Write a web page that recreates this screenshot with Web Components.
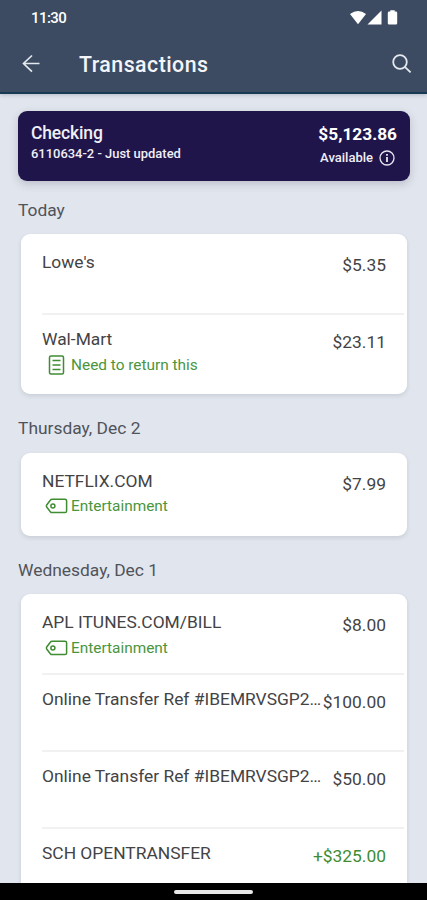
<!DOCTYPE html>
<html lang="en">
<head>
<meta charset="utf-8">
<title>Transactions</title>
<style>
html, body { margin: 0; height: 100%; overflow: hidden; }
body { font-family: Roboto, "Liberation Sans", sans-serif; }
</style>
</head>
<body>
<bank-screen>
  <status-bar slot="top" time="11:30"></status-bar>
  <app-bar slot="top">Transactions</app-bar>
  <account-card name="Checking" detail="6110634-2 - Just updated" balance="$5,123.86"></account-card>
  <day-group label="Today">
    <transaction-row amount="$5.35">Lowe's</transaction-row>
    <transaction-row amount="$23.11" note="Need to return this" icon="memo">Wal-Mart</transaction-row>
  </day-group>
  <day-group label="Thursday, Dec 2">
    <transaction-row amount="$7.99" note="Entertainment" icon="tag">NETFLIX.COM</transaction-row>
  </day-group>
  <day-group label="Wednesday, Dec 1">
    <transaction-row amount="$8.00" note="Entertainment" icon="tag">APL ITUNES.COM/BILL</transaction-row>
    <transaction-row amount="$100.00">Online Transfer Ref #IBEMRVSGP2…</transaction-row>
    <transaction-row amount="$50.00">Online Transfer Ref #IBEMRVSGP2…</transaction-row>
    <transaction-row amount="+$325.00" credit>SCH OPENTRANSFER</transaction-row>
  </day-group>
  <nav-pill slot="bottom"></nav-pill>
</bank-screen>
<script>
const define = (name, markup, fill) => customElements.define(name, class extends HTMLElement {
  constructor() {
    super();
    const t = document.createElement('template');
    t.innerHTML = markup;
    this.attachShadow({ mode: 'open' }).append(t.content.cloneNode(true));
  }
  connectedCallback() { if (fill) fill(this, this.shadowRoot); }
});

define('bank-screen', `
<style>
:host { display: flex; flex-direction: column; width: 427px; height: 900px; background: #e1e5ed; overflow: hidden; }
header { flex: none; height: 92px; background: #3c4b61; border-bottom: 2px solid #173b52; box-shadow: 0 1px 4px rgba(40,55,80,.25); }
main { flex: 1; min-height: 0; overflow: hidden; padding-top: 17px; }
</style>
<header><slot name="top"></slot></header>
<main><slot></slot></main>
<slot name="bottom"></slot>`);

define('status-bar', `
<style>
:host { display: flex; align-items: center; justify-content: space-between; height: 36px; padding: 0 28px 0 31px; color: #fff; font-size: 15px; font-weight: 500; box-sizing: border-box; }
span { letter-spacing: -.55px; }
svg { display: block; }
</style>
<span></span>
<svg width="50" height="16" viewBox="0 0 50 16" fill="#fff">
  <path d="M1 4.1Q9 -2.3 17 4.1L9 14.2Z"/><path d="M32.5 .5V14.5H18.5Z"/>
  <path d="M41.3 1.6V.3h4.4v1.3h1.2q1.3 0 1.3 1.3v10.3q0 1.3-1.3 1.3h-6.800q-1.300 0-1.300-1.300V2.900q0-1.300 1.300-1.300z"/>
</svg>`, (el, r) => r.querySelector('span').textContent = el.getAttribute('time'));

define('app-bar', `
<style>
:host { display: flex; align-items: center; height: 57px; padding: 0 15px 0 22px; color: #f3f5f9; box-sizing: border-box; }
h1 { flex: 1; margin: 0 0 0 38px; font-size: 21.300px; font-weight: 500; letter-spacing: .48px; line-height: 26px; padding-top: 1px; }
svg { display: block; fill: none; stroke: #e4e8ef; position: relative; top: -.5px; }
</style>
<svg width="19" height="20" viewBox="0 0 19 20" stroke-width="1.7"><path d="M17.500 9.500H1.800M10 1.500L1.500 9.500L10 17.700"/></svg>
<h1><slot></slot></h1>
<svg width="21" height="20" viewBox="0 0 21 20" stroke-width="1.8"><circle cx="9" cy="8" r="6.800"/><path d="M13.800 12.800L19.600 18.400"/></svg>`);

define('account-card', `
<style>
:host { display: flex; justify-content: space-between; box-sizing: border-box; height: 70px; margin: 0 17px 0 18px; padding: 11px 13px 0; border-radius: 9px; background: #20154b; color: #f0eff5; font-weight: 500; box-shadow: 0 3px 8px rgba(50,55,80,.22); white-space: nowrap; }
.name { font-size: 17.500px; line-height: 22px; letter-spacing: -.15px; }
.detail { font-size: 12.950px; line-height: 20px; }
.right { display: flex; flex-direction: column; align-items: flex-end; }
.bal { font-size: 17.300px; line-height: 24px; font-weight: 700; color: #fff; }
.avail { display: flex; align-items: center; gap: 6px; font-size: 13px; line-height: 24px; padding-right: 2px; }
svg { fill: none; stroke: #e8e6f0; display: block; }
</style>
<div><div class="name"></div><div class="detail"></div></div>
<div class="right"><div class="bal"></div><div class="avail"><span>Available</span>
<svg width="16" height="16" viewBox="0 0 16 16"><circle cx="8" cy="8" r="7" stroke-width="1.300"/><path d="M8 7V12M8 4V5.700" stroke-width="1.800"/></svg></div></div>`,
(el, r) => {
  r.querySelector('.name').textContent = el.getAttribute('name');
  r.querySelector('.detail').textContent = el.getAttribute('detail');
  r.querySelector('.bal').textContent = el.getAttribute('balance');
});

define('day-group', `
<style>
:host { display: block; }
h2 { margin: 0 18px; height: 58.500px; line-height: 69px; padding: 0; box-sizing: border-box; font-size: 17.400px; font-weight: 400; color: #50535a; }
:host(:first-of-type) h2 { height: 53px; line-height: 59px; }
section { margin: 0 20px 0 21px; padding: 4px 0 2px; border-radius: 9px; background: #fff; box-shadow: 0 2px 4px rgba(60,75,85,.14); }
</style>
<h2></h2><section><slot></slot></section>`, (el, r) => r.querySelector('h2').textContent = el.getAttribute('label'));

define('transaction-row', `
<style>
:host { display: grid; grid-template-columns: minmax(0, 1fr) auto; align-content: start; box-sizing: border-box; height: 77px; margin: 0 3px 0 21px; padding: 12px 18px 0 0; border-bottom: 2px solid #f1f1f1; color: #434345; font-size: 17.400px; font-weight: 400; white-space: nowrap; }
:host(:last-of-type) { border-bottom-color: transparent; }
.title { line-height: 24px; min-width: 0; }
.amount { line-height: 30px; height: 24px; }
:host([credit]) .amount { color: #3f8c32; }
.note { display: none; grid-column: 1 / -1; align-items: center; height: 27px; color: #4a953d; font-size: 15.400px; }
:host([note]) .note { display: flex; }
.pic { display: flex; justify-content: flex-end; width: 26px; margin-right: 3px; }
svg { display: none; fill: none; stroke: #3f8c32; stroke-width: 1.500; }
:host([icon=memo]) .memo, :host([icon=tag]) .tag { display: block; }
.memo { margin-right: 3px; }
</style>
<div class="title"><slot></slot></div><div class="amount"></div>
<div class="note"><span class="pic">
<svg class="memo" width="17" height="20" viewBox="0 0 17 20"><rect x="1.500" y="1" width="14" height="18" rx="1.500"/><path d="M4.500 5.500H12.500M4.500 10H12.500M4.500 14.500H12.500"/></svg>
<svg class="tag" width="23" height="16" viewBox="0 0 23 16"><path d="M7.100 1.200H20q1.600 0 1.600 1.600V13q0 1.600-1.600 1.600H7.100Q6 14.600 5.300 13.700L1.700 9Q1.100 8 1.700 7L5.300 2.200Q6 1.200 7.100 1.200Z"/><circle cx="7.900" cy="8" r="2"/></svg>
</span><span class="text"></span></div>`, (el, r) => {
  r.querySelector('.amount').textContent = el.getAttribute('amount');
  r.querySelector('.text').textContent = el.getAttribute('note') || '';
});

define('nav-pill', `
<style>
:host { display: flex; flex: none; justify-content: center; align-items: center; height: 17px; background: #000; }
i { width: 79px; height: 4px; border-radius: 2px; background: #e8e8e8; margin-top: 1px; }
</style><i></i>`);
</script>
</body>
</html>
